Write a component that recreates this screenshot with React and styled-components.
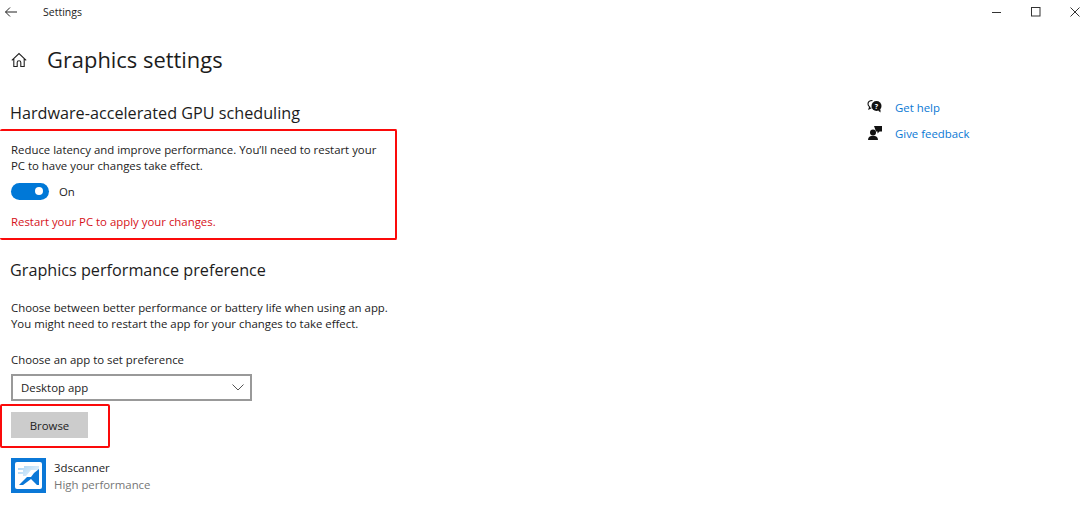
import React from "react";
import styled, { createGlobalStyle } from "styled-components";

const Global = createGlobalStyle`
  html, body { margin: 0; padding: 0; background: #fff; }
  body { font-family: "Open Sans", "Noto Sans", sans-serif; color: #1a1a1a; overflow: hidden; }
`;
const Page = styled.div`width: 1086px; height: 520px; display: flex; flex-direction: column; background: #fff; overflow: hidden;`;
const TitleBar = styled.header`height: 24px; display: flex; align-items: center; flex: none;`;
const BackIcon = styled.svg`width: 12px; height: 10px; margin-left: 5px; flex: none;`;
const TitleText = styled.span`margin-left: 26px; font-size: 10.5px; line-height: 24px; color: #222;`;
const WindowControls = styled.div`margin-left: auto; display: flex; align-items: center; gap: 29px;`;
const ControlIcon = styled.svg`width: 10px; height: 10px; display: block; margin-right: ${p => p.$end || 0}px;`;
const Body = styled.main`flex: 1; display: flex; justify-content: space-between;`;
const Left = styled.section`width: 400px; display: flex; flex-direction: column;`;
const Right = styled.aside`width: 219px; padding-top: 74px; display: flex; flex-direction: column; gap: 8px;`;
const Heading = styled.div`display: flex; align-items: center; height: 40px; margin-top: 16px; padding-left: 11px;`;
const HomeIcon = styled.svg`width: 16px; height: 16px; flex: none;`;
const H1 = styled.h1`margin: 0 0 0 20px; font-size: 21.9px; font-weight: 400; color: #1c1c1c; line-height: 40px; white-space: nowrap;`;
const H2 = styled.h2`margin: ${p => p.$top}px 0 0 10px; font-size: 16.2px; font-weight: 400; line-height: 24px; color: #1c1c1c; white-space: nowrap;`;
const NoticeBox = styled.div`width: 397px; height: 111px; box-sizing: border-box; border: 2px solid #fb0a0a; border-left: 0; border-radius: 2px; margin-top: 4px; padding: 11px 0 0 11px;`;
const Para = styled.p`margin: 0; font-size: 11.4px; line-height: 16px; color: #222; white-space: nowrap;`;
const ToggleRow = styled.div`display: flex; align-items: center; gap: 10px; margin-top: 8px; height: 18px;`;
const Toggle = styled.div`width: 38px; height: 17px; border-radius: 9px; background: #0078d7; position: relative;`;
const Knob = styled.span`position: absolute; right: 6px; top: 4.5px; width: 8px; height: 8px; border-radius: 50%; background: #fff;`;
const ToggleLabel = styled.span`font-size: 11.4px; color: #222;`;
const Warning = styled.div`margin-top: 14px; font-size: 11.4px; line-height: 16px; color: #d6121a; white-space: nowrap;`;
const Indented = styled.div`margin: ${p => p.$top}px 0 0 11px;`;
const Select = styled.div`width: 241px; height: 27px; box-sizing: border-box; border: 2px solid #999; margin: 6px 0 0 11px; display: flex; align-items: center; justify-content: space-between; padding: 0 6px 0 8px; font-size: 11.4px; color: #222;`;
const Chevron = styled.svg`width: 12px; height: 7px;`;
const BrowseBox = styled.div`width: 110px; height: 44px; box-sizing: border-box; border: 2px solid #fb0a0a; border-radius: 2px; margin: 3px 0 0 0; padding: 6px 0 0 9px;`;
const Browse = styled.button`display: block; width: 77px; height: 26px; border: 0; padding: 0; background: #cccccc; font: inherit; font-size: 11.4px; color: #222;`;
const AppRow = styled.div`display: flex; align-items: center; gap: 8px; margin: 10px 0 0 11px;`;
const AppIcon = styled.svg`width: 35px; height: 35px; flex: none; display: block;`;
const AppText = styled.div`display: flex; flex-direction: column;`;
const AppName = styled.span`font-size: 11.4px; line-height: 17px; color: #222;`;
const AppSub = styled.span`font-size: 11.4px; line-height: 17px; color: #767676;`;
const HelpRow = styled.a`display: flex; align-items: center; height: 18px; color: #0a78d4; font-size: 11.4px; white-space: nowrap;`;
const HelpIcon = styled.svg`width: 16px; height: 16px; margin-right: 12px; flex: none;`;

export default function App() {
  return (
    <Page>
      <Global />
      <TitleBar>
        <BackIcon viewBox="0 0 12 10" fill="none" stroke="#222" strokeWidth="1"><path d="M0.5 5H12M5 0.500L0.5 5L5 9.500" /></BackIcon>
        <TitleText>Settings</TitleText>
        <WindowControls>
          <ControlIcon viewBox="0 0 10 10" stroke="#333" fill="none"><path d="M0 5.500H9" /></ControlIcon>
          <ControlIcon viewBox="0 0 10 10" stroke="#333" fill="none"><rect x="0.5" y="0.5" width="8.500" height="8.500" /></ControlIcon>
          <ControlIcon $end={6} viewBox="0 0 10 10" stroke="#333" fill="none"><path d="M0.5 0.500L9.500 9.500M9.500 0.500L0.5 9.500" /></ControlIcon>
        </WindowControls>
      </TitleBar>
      <Body>
        <Left>
          <Heading>
            <HomeIcon viewBox="0 0 16 16" fill="none" stroke="#222" strokeWidth="1.1"><path d="M0.8 8.300L8 1.500L15.200 8.300M2.800 6.500V14.500H6.200V10.500C6.200 8.200 9.800 8.200 9.800 10.500V14.500H13.200V6.500" /></HomeIcon>
            <H1>Graphics settings</H1>
          </Heading>
          <H2 $top={21}>Hardware-accelerated GPU scheduling</H2>
          <NoticeBox>
            <Para>Reduce latency and improve performance. You’ll need to restart your<br />PC to have your changes take effect.</Para>
            <ToggleRow><Toggle><Knob /></Toggle><ToggleLabel>On</ToggleLabel></ToggleRow>
            <Warning>Restart your PC to apply your changes.</Warning>
          </NoticeBox>
          <H2 $top={18}>Graphics performance preference</H2>
          <Indented $top={18}>
            <Para>Choose between better performance or battery life when using an app.<br />You might need to restart the app for your changes to take effect.</Para>
          </Indented>
          <Indented $top={20}><Para>Choose an app to set preference</Para></Indented>
          <Select>Desktop app
            <Chevron viewBox="0 0 12 7" fill="none" stroke="#555"><path d="M0.5 0.500L6 6L11.500 0.500" /></Chevron>
          </Select>
          <BrowseBox><Browse>Browse</Browse></BrowseBox>
          <AppRow>
            <AppIcon viewBox="0 0 35 35">
              <defs>
                <linearGradient id="pale" x1="0" y1="0" x2="1" y2="0.6">
                  <stop offset="0" stopColor="#a8d4f5" />
                  <stop offset="1" stopColor="#e4f1fb" />
                </linearGradient>
              </defs>
              <rect width="35" height="35" fill="#0b78d7" />
              <rect x="4" y="4" width="27" height="27" rx="2" fill="#fff" />
              <path d="M13 8H28V12H20L15 18L12 18V16H7V14H12V12H7V10H13Z" fill="url(#pale)" />
              <path d="M28 11V27H26L20 21L12 27H8L16 19L20 19L23 15L28 11Z" fill="#0b78d7" />
            </AppIcon>
            <AppText><AppName>3dscanner</AppName><AppSub>High performance</AppSub></AppText>
          </AppRow>
        </Left>
        <Right>
          <HelpRow>
            <HelpIcon viewBox="0 0 16 16">
              <path d="M5.500 1.500C2.800 1.500 1 3 1 5c0 1.200.6 2.200 1.600 2.900L2 10l2.400-1.300" fill="none" stroke="#111" strokeWidth="1.100" />
              <circle cx="9.500" cy="7" r="5" fill="#111" />
              <path d="M11 11.500l2.500 2v-3z" fill="#111" />
              <text x="9.500" y="9.600" fontSize="7" fontWeight="700" fill="#fff" textAnchor="middle">?</text>
            </HelpIcon>
            Get help
          </HelpRow>
          <HelpRow>
            <HelpIcon viewBox="0 0 16 16">
              <circle cx="6" cy="7.500" r="3" fill="#111" />
              <path d="M1 15c0-3 2-4.200 5-4.200s5 1.200 5 4.200z" fill="#111" />
              <path d="M7 1h8v5.500h-2.500L10.500 8.500V6.500H9z" fill="#111" />
            </HelpIcon>
            Give feedback
          </HelpRow>
        </Right>
      </Body>
    </Page>
  );
}
